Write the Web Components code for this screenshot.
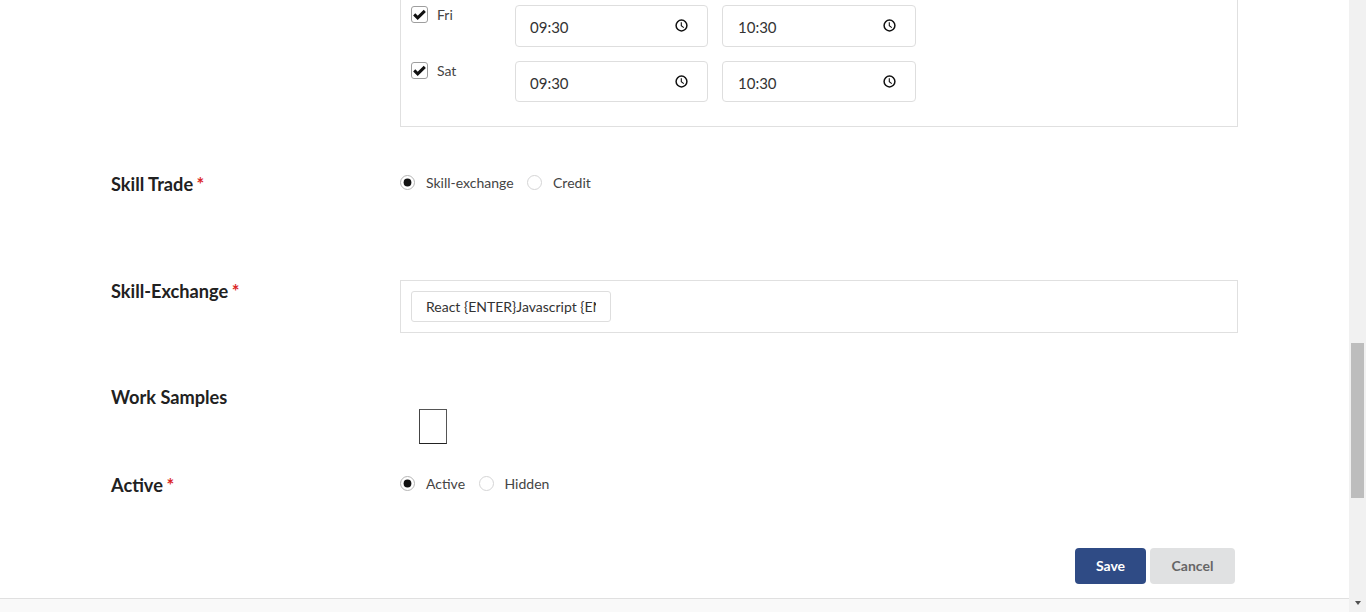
<!DOCTYPE html>
<html lang="en">
<head>
<meta charset="utf-8">
<title>Service listing</title>
<style>
  html, body { margin: 0; height: 612px; overflow: hidden; background: #fff; }
  body { font-family: Lato, "Open Sans", sans-serif; font-size: 14px; color: #212121; }
  panel-box { margin-left: 400px; margin-right: 111px; }
  form-row { margin-left: 111px; margin-right: 111px; }
</style>
</head>
<body>
<page-shell>
  <panel-box>
    <time-row day="Fri" start="09:30" end="10:30"></time-row>
    <time-row day="Sat" start="09:30" end="10:30"></time-row>
  </panel-box>

  <form-row label="Skill Trade" required top="46" height="107">
    <radio-option checked>Skill-exchange</radio-option>
    <radio-option>Credit</radio-option>
  </form-row>

  <form-row label="Skill-Exchange" required height="106">
    <tag-box>React {ENTER}Javascript {ENTER}</tag-box>
  </form-row>

  <form-row label="Work Samples" height="88">
    <sample-thumb></sample-thumb>
  </form-row>

  <form-row label="Active" required height="74">
    <radio-option checked>Active</radio-option>
    <radio-option>Hidden</radio-option>
  </form-row>

  <form-actions>
    <action-button kind="primary">Save</action-button>
    <action-button>Cancel</action-button>
  </form-actions>
</page-shell>

<script>
function shadow(el, html) {
  el.attachShadow({ mode: "open" }).innerHTML = html;
}

class PageShell extends HTMLElement {
  connectedCallback() {
    shadow(this, `<style>
      :host { display: flex; height: 612px; }
      .col { flex: 1; min-width: 0; display: flex; flex-direction: column; }
      main { flex: 1; min-height: 0; display: flex; flex-direction: column; }
      footer { height: 13px; background: #f9f9f9; border-top: 1px solid #e0e0e0; }
      aside { width: 17px; background: #f1f1f1; display: flex; flex-direction: column; align-items: center; padding-top: 343px; box-sizing: border-box; }
      .thumb { width: 13px; height: 155px; background: #bdbdbd; }
      .arrow { margin-top: auto; margin-bottom: 7px; width: 0; height: 0; border: 3.5px solid transparent; border-top: 4px solid #505050; border-bottom: 0; }
    </style>
    <div class="col"><main><slot></slot></main><footer></footer></div>
    <aside><div class="thumb"></div><div class="arrow"></div></aside>`);
  }
}

class PanelBox extends HTMLElement {
  connectedCallback() {
    shadow(this, `<style>
      :host { display: flex; flex-direction: column; gap: 14.3px; box-sizing: border-box; height: 127px; padding: 5px 321px 0 10px; border: 1px solid #e0e0e0; border-top: 0; }
    </style><slot></slot>`);
  }
}

class TimeRow extends HTMLElement {
  connectedCallback() {
    const a = (n) => this.getAttribute(n);
    shadow(this, `<style>
      :host { display: grid; grid-template-columns: 90px 193px 194px; column-gap: 14px; height: 41.5px; }
      .day { display: flex; align-items: flex-start; gap: 9px; padding-top: 1px; font-size: 14px; color: #444; line-height: 18px; }
      .box { width: 15px; height: 15px; border: 1px solid #9e9e9e; border-radius: 3px; display: flex; align-items: center; justify-content: center; }
      .field { display: flex; align-items: center; justify-content: space-between; box-sizing: border-box; border: 1px solid #dedede; border-radius: 4px; padding: 0 19px 0 14px; font-size: 15px; color: #333; }
      .field:last-child { padding-left: 15px; }
      .field span { position: relative; top: 1px; }
      svg { display: block; }
    </style>
    <div class="day">
      <div class="box"><svg width="13" height="11" viewBox="0 0 13 11"><path d="M1.2 5.4 4.7 8.9 11.8 1.9" fill="none" stroke="#111" stroke-width="3"/></svg></div>
      <span>${a("day")}</span>
    </div>
    ${[a("start"), a("end")].map((t) => `<div class="field"><span>${t}</span>
      <svg width="13" height="13" viewBox="0 0 13 13"><circle cx="6.5" cy="6.5" r="5.4" fill="none" stroke="#111" stroke-width="1.5"/><path d="M6.3 3.2V6.8L8.8 8.6" fill="none" stroke="#111" stroke-width="1.1"/></svg>
    </div>`).join("")}`);
  }
}

class FormRow extends HTMLElement {
  connectedCallback() {
    const star = this.hasAttribute("required") ? `<i>*</i>` : "";
    const top = this.getAttribute("top") || 0;
    shadow(this, `<style>
      :host { display: grid; grid-template-columns: 289px 1fr; align-items: start; box-sizing: border-box; margin-top: ${top}px; height: ${this.getAttribute("height")}px; }
      .label { font-size: 18.2px; font-weight: 700; line-height: 22px; color: #212121; }
      i { font-style: normal; color: #db2828; margin-left: 3.5px; font-weight: 700; }
      .field { display: flex; align-items: center; gap: 13.5px; min-width: 0; }
    </style>
    <div class="label">${this.getAttribute("label")}${star}</div>
    <div class="field"><slot></slot></div>`);
  }
}

class RadioOption extends HTMLElement {
  connectedCallback() {
    const on = this.hasAttribute("checked");
    shadow(this, `<style>
      :host { display: inline-flex; align-items: center; gap: 11px; font-size: 14px; line-height: 18px; color: #444; }
      svg { display: block; }
      .text { position: relative; top: 1px; }
    </style>
    <svg width="15" height="15" viewBox="0 0 15 15">
      <circle cx="7.5" cy="7.5" r="7" fill="#fff" stroke="${on ? "#b5b5b5" : "#d4d4d5"}"/>
      ${on ? `<circle cx="7.5" cy="7.5" r="3.9" fill="#111"/>` : ""}
    </svg>
    <span class="text"><slot></slot></span>`);
  }
}

class TagBox extends HTMLElement {
  connectedCallback() {
    shadow(this, `<style>
      :host { display: flex; flex: 1; box-sizing: border-box; height: 53px; padding: 10px; border: 1px solid #e0e0e0; }
      .tag { box-sizing: border-box; width: 200px; height: 31px; padding: 0 14px; border: 1px solid #dedede; border-radius: 3px; }
      .text { display: block; font-size: 14px; line-height: 30px; color: #333; white-space: nowrap; overflow: hidden; }
    </style><div class="tag"><span class="text"><slot></slot></span></div>`);
  }
}

class SampleThumb extends HTMLElement {
  connectedCallback() {
    shadow(this, `<style>
      :host { display: block; box-sizing: border-box; width: 28px; height: 35px; margin: 23px 0 0 19px; border: 1px solid #222; border-color: #555 #555 #222 #444; }
    </style>`);
  }
}

class FormActions extends HTMLElement {
  connectedCallback() {
    shadow(this, `<style>
      :host { display: flex; justify-content: flex-end; gap: 4px; padding-right: 114px; }
    </style><slot></slot>`);
  }
}

class ActionButton extends HTMLElement {
  connectedCallback() {
    const primary = this.getAttribute("kind") === "primary";
    shadow(this, `<style>
      :host { display: flex; align-items: center; justify-content: center; box-sizing: border-box; height: 36px; padding-bottom: 2px; width: ${primary ? 71 : 85}px; border-radius: 4px; font-size: 14px; font-weight: 700; background: ${primary ? "#2f4b85" : "#e0e1e2"}; color: ${primary ? "#fff" : "#666"}; }
    </style><slot></slot>`);
  }
}

customElements.define("page-shell", PageShell);
customElements.define("panel-box", PanelBox);
customElements.define("time-row", TimeRow);
customElements.define("form-row", FormRow);
customElements.define("radio-option", RadioOption);
customElements.define("tag-box", TagBox);
customElements.define("sample-thumb", SampleThumb);
customElements.define("form-actions", FormActions);
customElements.define("action-button", ActionButton);
</script>
</body>
</html>
